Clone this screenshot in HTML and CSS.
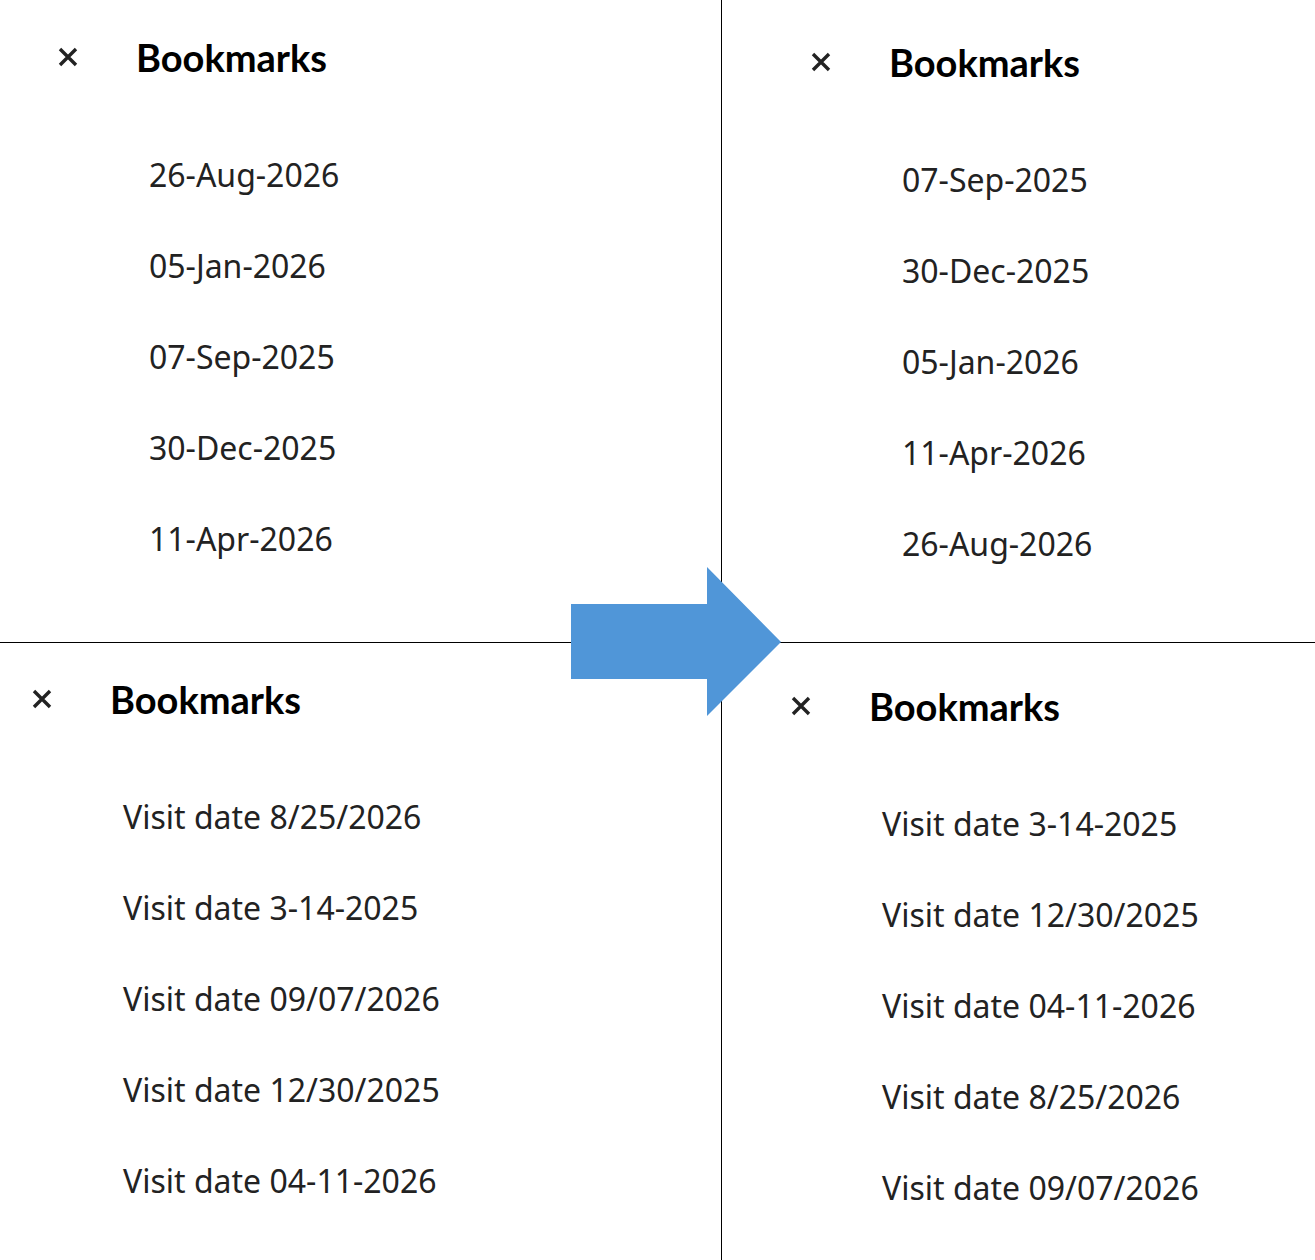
FILE: index.html
```html
<!DOCTYPE html>
<html lang="en">
<head>
    <meta charset="UTF-8">
    <meta name="viewport" content="width=device-width, initial-scale=1.0">
    <title>Bookmarks sorting</title>
    <link rel="stylesheet" href="styles.css">
</head>
<body>
    <div class="board">
        <section class="panel panel-tl">
            <header class="panel-head">
                <svg class="close" viewBox="0 0 20 20"><path d="M2 2 L18 18 M18 2 L2 18"/></svg>
                <h1>Bookmarks</h1>
            </header>
            <ul class="items">
                <li>26-Aug-2026</li>
                <li>05-Jan-2026</li>
                <li>07-Sep-2025</li>
                <li>30-Dec-2025</li>
                <li>11-Apr-2026</li>
            </ul>
        </section>

        <!-- Top right -->
        <section class="panel panel-tr">
            <header class="panel-head">
                <svg class="close" viewBox="0 0 20 20"><path d="M2 2 L18 18 M18 2 L2 18"/></svg>
                <h1>Bookmarks</h1>
            </header>
            <ul class="items">
                <li>07-Sep-2025</li>
                <li>30-Dec-2025</li>
                <li>05-Jan-2026</li>
                <li>11-Apr-2026</li>
                <li>26-Aug-2026</li>
            </ul>
        </section>

        <!-- Bottom left -->
        <section class="panel panel-bl">
            <header class="panel-head">
                <svg class="close" viewBox="0 0 20 20"><path d="M2 2 L18 18 M18 2 L2 18"/></svg>
                <h1>Bookmarks</h1>
            </header>
            <ul class="items">
                <li>Visit date 8/25/2026</li>
                <li>Visit date 3-14-2025</li>
                <li>Visit date 09/07/2026</li>
                <li>Visit date 12/30/2025</li>
                <li>Visit date 04-11-2026</li>
            </ul>
        </section>

        <!-- Bottom right -->
        <section class="panel panel-br">
            <header class="panel-head">
                <svg class="close" viewBox="0 0 20 20"><path d="M2 2 L18 18 M18 2 L2 18"/></svg>
                <h1>Bookmarks</h1>
            </header>
            <ul class="items">
                <li>Visit date 3-14-2025</li>
                <li>Visit date 12/30/2025</li>
                <li>Visit date 04-11-2026</li>
                <li>Visit date 8/25/2026</li>
                <li>Visit date 09/07/2026</li>
            </ul>
        </section>

        <!-- Seta do antes para o depois -->
        <svg class="arrow" viewBox="0 0 210 149">
            <polygon points="0,37 136,37 136,0 210,75 136,149 136,112 0,112"/>
        </svg>
    </div>
</body>
</html>
```

FILE: styles.css
```css
body {
    margin: 0;
    padding: 0;
    background-color: #fff;
    color: #222;
    font-family: "Noto Sans", "Open Sans", sans-serif;
}
.board {
    position: relative;
    display: grid;
    grid-template-columns: 722px 593px;
    grid-template-rows: 643px 617px;
    width: 1315px;
    height: 1260px;
    overflow: hidden;
}
.panel {
    box-sizing: border-box;
}
.panel-tl, .panel-bl {
    border-right: 1px solid #000;
}
.panel-tl, .panel-tr {
    border-bottom: 1px solid #000;
}
/* Cada painel tem um deslocamento próprio */
.panel-tl {
    padding: 37px 0 0 58px;
}
.panel-tr {
    padding: 42px 0 0 89px;
}
.panel-bl {
    padding: 36px 0 0 32px;
}
.panel-br {
    padding: 43px 0 0 69px;
}
.panel-head {
    display: flex;
    align-items: center;
    height: 40px;
}
.close {
    width: 20px;
    height: 20px;
    fill: none;
    stroke: #222;
    stroke-width: 3.4;
    margin-right: 58px;
    flex-shrink: 0;
}
.panel-head h1 {
    margin: 0;
    font-family: "Lato", sans-serif;
    font-weight: 700;
    font-size: 38px;
    color: #000;
    line-height: 40px;
}
.items {
    list-style: none;
    margin: 78px 0 0 91px;
    padding: 0;
}
.items li {
    font-size: 32px;
    height: 91px;
    line-height: 40px;
}
.arrow {
    position: absolute;
    left: 571px;
    top: 567px;
    width: 210px;
    height: 149px;
    fill: #5096d8;
}
```
